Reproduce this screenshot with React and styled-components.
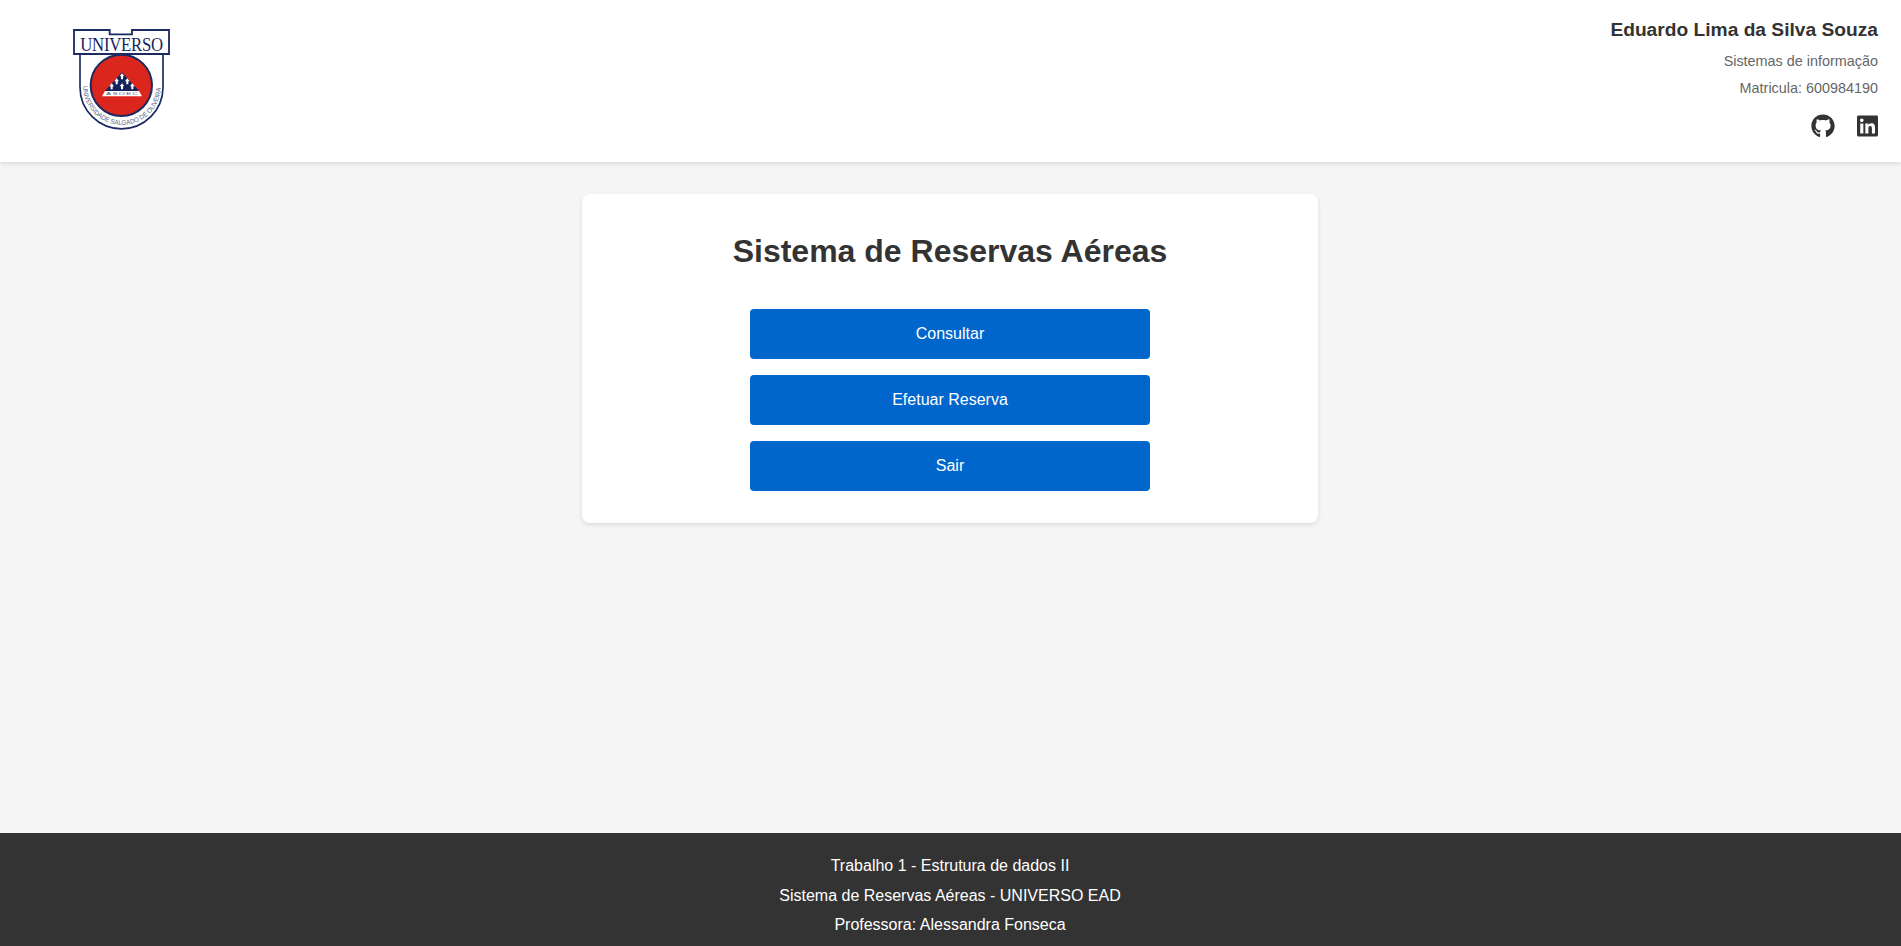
import React from "react";
import styled, { createGlobalStyle } from "styled-components";
import { FaGithub, FaLinkedin } from "react-icons/fa";

const GlobalStyle = createGlobalStyle`
  * { box-sizing: border-box; margin: 0; padding: 0; }
  body {
    font-family: "Liberation Sans", Arial, sans-serif;
    line-height: 1.6;
    color: #333;
    background: #f5f5f5;
  }
`;

const Page = styled.div`
  display: flex;
  flex-direction: column;
  height: 100vh;
  overflow: hidden;
`;

const Header = styled.header`
  display: flex;
  justify-content: space-between;
  align-items: flex-start;
  height: 162px;
  padding: 14px 23px 0 60px;
  background: #fff;
  box-shadow: 0 2px 4px rgba(0, 0, 0, 0.1);
`;

const Logo = styled.svg`
  width: 120px;
  height: 120px;
  margin-top: 6px;
`;

const Profile = styled.div`
  display: flex;
  flex-direction: column;
  align-items: flex-end;
`;

const Name = styled.h2`
  padding-top: 1px;
  font-size: 19.2px;
  line-height: 30.7px;
  margin-bottom: 3.8px;
`;

const Detail = styled.p`
  font-size: 14.4px;
  line-height: 23px;
  margin-bottom: 4px;
  color: #666;
`;

const Social = styled.nav`
  display: flex;
  gap: 22px;
  margin-top: 10px;
`;

const SocialLink = styled.a`
  display: flex;
  color: #333;

  svg {
    width: ${({ $width }) => $width}px;
    height: 24px;
  }
`;

const Main = styled.main`
  flex: 1;
  display: flex;
  justify-content: center;
  align-items: flex-start;
  padding: 32px;
`;

const Card = styled.section`
  display: flex;
  flex-direction: column;
  align-items: center;
  width: 736px;
  padding: 32px;
  margin-right: 1px;
  background: #fff;
  border-radius: 8px;
  box-shadow: 0 2px 4px rgba(0, 0, 0, 0.1);
`;

const Title = styled.h1`
  font-size: 32px;
  line-height: 51px;
  margin-bottom: 32px;
`;

const Menu = styled.div`
  display: flex;
  flex-direction: column;
  gap: 16px;
  width: 400px;
`;

const MenuButton = styled.button`
  height: 50px;
  border: 0;
  border-radius: 4px;
  background: #0066cc;
  color: #fff;
  font-family: inherit;
  font-size: 16px;
  cursor: pointer;
`;

const Footer = styled.footer`
  display: flex;
  flex-direction: column;
  align-items: center;
  gap: 4px;
  height: 113px;
  padding: 20px 1px 0 0;
  background: #333;
  color: #fff;
`;

function UniversityCrest() {
  return (
    <Logo viewBox="0 0 360 360" role="img" aria-label="UNIVERSO">
      <path d="M60 102V202A124.500 124.500 0 0 0 309 202V102" fill="#fff" stroke="#1b2a60" strokeWidth="5" />
      <path d="M42 30H149V43H216V30H327V102H42Z" fill="#fff" stroke="#1b2a60" strokeWidth="5.500" />
      <text transform="translate(185 93) scale(.93 1)" textAnchor="middle" textLength="267" lengthAdjust="spacing" fontFamily="Liberation Serif, serif" fontSize="54" fill="#14235c">UNIVERSO</text>
      <circle cx="184" cy="196" r="92" fill="#db261d" stroke="#1b2a60" strokeWidth="6" />
      <path d="M186 157L237 213H135Z" fill="#14235c" />
      <g fill="#fff">
        {[[186, 160], [170, 175], [202, 175], [155, 190], [186, 190], [217, 190]].map(([x, y]) => (
          <path key={`${x}-${y}`} d={`M${x} ${y}l7 9h-4v9h-6v-9h-4z`} />
        ))}
        <path d="M135 213H237L246 229H126Z" />
      </g>
      <text transform="translate(186 226) scale(1.8 1)" textAnchor="middle" textLength="53" lengthAdjust="spacing" fontFamily="Liberation Sans, sans-serif" fontSize="13" fill="#4d5988">ASOEC</text>
      <path id="crest-arc" d="M69 198A117 117 0 0 0 303 198" fill="none" />
      <text fontFamily="Liberation Sans, sans-serif" fontSize="20" fill="#59688d">
        <textPath href="#crest-arc" textLength="362" lengthAdjust="spacingAndGlyphs">UNIVERSIDADE SALGADO DE OLIVEIRA</textPath>
      </text>
    </Logo>
  );
}

export default function App() {
  return (
    <>
      <GlobalStyle />
      <Page>
        <Header>
          <UniversityCrest />
          <Profile>
            <Name>Eduardo Lima da Silva Souza</Name>
            <Detail>Sistemas de informação</Detail>
            <Detail>Matricula: 600984190</Detail>
            <Social>
              <SocialLink $width={24} href="#github" aria-label="GitHub"><FaGithub /></SocialLink>
              <SocialLink $width={21} href="#linkedin" aria-label="LinkedIn"><FaLinkedin /></SocialLink>
            </Social>
          </Profile>
        </Header>
        <Main>
          <Card>
            <Title>Sistema de Reservas Aéreas</Title>
            <Menu>
              <MenuButton>Consultar</MenuButton>
              <MenuButton>Efetuar Reserva</MenuButton>
              <MenuButton>Sair</MenuButton>
            </Menu>
          </Card>
        </Main>
        <Footer>
          <p>Trabalho 1 - Estrutura de dados II</p>
          <p>Sistema de Reservas Aéreas - UNIVERSO EAD</p>
          <p>Professora: Alessandra Fonseca</p>
        </Footer>
      </Page>
    </>
  );
}
